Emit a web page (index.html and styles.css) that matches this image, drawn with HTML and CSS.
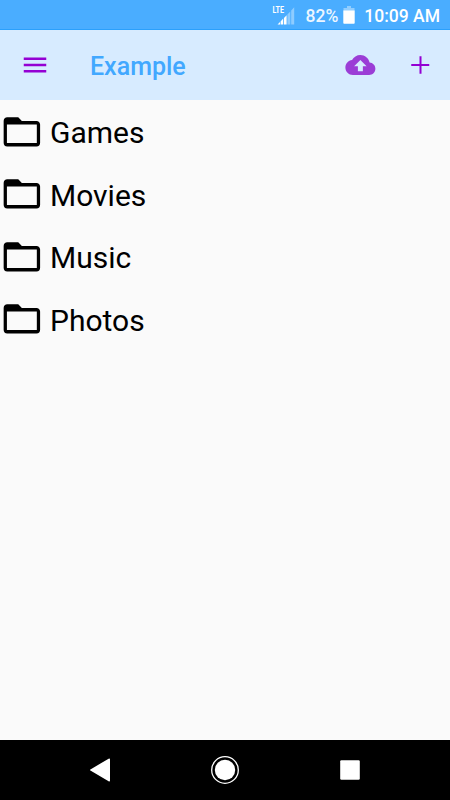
FILE: index.html
```html
<!DOCTYPE html>
<html lang="en">
<head>
<meta charset="utf-8">
<title>Example</title>
<link rel="stylesheet" href="styles.css">
</head>
<body>
<svg width="0" height="0" class="defs">
  <symbol id="folder" viewBox="0 0 24 24"><path d="M20.2 18.1H3.8V7.9h16.4M20 6h-8l-2-2H4C2.89 4 2 4.89 2 6v12a2 2 0 0 0 2 2h16a2 2 0 0 0 2-2V8c0-1.11-.9-2-2-2Z"/></symbol>
</svg>
<div class="screen">
  <div class="status">
    <svg class="signal" width="24" height="22" viewBox="0 0 24 22">
      <text class="lte" x=".5" y="7.5" textLength="11.5" lengthAdjust="spacingAndGlyphs">LTE</text>
      <path fill="#fff" d="M5.5 19.5 8 17v2.5zM8.6 19.5v-3.1l2.6-2.8v5.9zM12 19.5v-6.6l2.6-2.7v9.3z"/>
      <path fill="#fff" opacity=".38" d="M15.4 19.5V9.4l2.9-3v13.1zM19.2 19.5V5.4l3-3.1v17.2z"/>
    </svg>
    <span class="percent">82%</span>
    <svg class="battery" width="12" height="18" viewBox="0 0 12 18"><path fill="#fff" opacity=".4" d="M4 0h4v2h3.5v3H.5V2H4z"/><path fill="#fff" d="M.3 4.6h11.4V17a.8.8 0 0 1-.8.8H1.1a.8.8 0 0 1-.8-.8z"/></svg>
    <span class="time">10:09 AM</span>
  </div>
  <header class="bar">
    <svg class="icon" viewBox="0 0 24 24"><path d="M3 6h18v2H3zM3 11h18v2H3zM3 16h18v2H3z"/></svg>
    <h1>Example</h1>
    <svg class="icon cloud" viewBox="0 0 24 24"><path transform="translate(.3 0)" d="M19.35 10.04C18.67 6.59 15.64 4 12 4 9.11 4 6.6 5.64 5.35 8.04 2.34 8.36 0 10.91 0 14c0 3.31 2.69 6 6 6h13c2.76 0 5-2.24 5-5 0-2.64-2.05-4.78-4.65-4.96zM14 13v4h-4v-4H7l5-5 5 5z"/></svg>
    <svg class="icon plus" viewBox="0 0 24 24"><path d="M19.4 12.8h-6.2V19h-1.6v-6.2H5v-1.6h6.6V5h1.6v6.2h6.2z"/></svg>
  </header>
  <ul class="list">
    <li><svg class="folder"><use href="#folder"/></svg><span>Games</span></li>
    <li><svg class="folder"><use href="#folder"/></svg><span>Movies</span></li>
    <li><svg class="folder"><use href="#folder"/></svg><span>Music</span></li>
    <li><svg class="folder"><use href="#folder"/></svg><span>Photos</span></li>
  </ul>
  <nav class="nav">
    <svg width="30" height="30" viewBox="0 0 30 30"><path fill="#fff" d="M5.4 14.4 23.6 3.7q1.4-.6 1.4.9v20.8q0 1.5-1.4.9L5.4 15.6q-.9-.6 0-1.2z"/></svg>
    <svg width="30" height="30" viewBox="0 0 30 30"><circle cx="15" cy="15" r="10.2" fill="#fff"/><circle cx="15" cy="15" r="13.3" fill="none" stroke="#fff" stroke-width="1.3"/></svg>
    <svg width="30" height="30" viewBox="0 0 30 30"><rect x="5.2" y="5.2" width="19.6" height="19.6" rx="1.2" fill="#fff"/></svg>
  </nav>
</div>
</body>
</html>
```
FILE: styles.css
```css
* { box-sizing: border-box; }
body { margin: 0; font-family: Roboto, sans-serif; }
svg { display: block; flex: none; }
.defs { position: absolute; }
.screen {
  display: flex;
  flex-direction: column;
  width: 450px;
  height: 800px;
  overflow: hidden;
  background: #fafafa;
}
.status {
  display: flex;
  align-items: center;
  justify-content: flex-end;
  height: 30px;
  padding: 2px 10px 0 0;
  background: #4aadff;
  border-bottom: 1px solid #2ba0fc;
  color: #fff;
  font-size: 17.5px;
  font-weight: 500;
  line-height: 30px;
  white-space: nowrap;
}
.lte { fill: #fff; font-size: 9px; font-weight: 700; }
.percent { margin: 1px 0 0 10px; opacity: .9; }
.battery { margin: -1px 9px 0 5px; }
.time { margin-top: 1px; }
.bar {
  display: flex;
  align-items: center;
  height: 70px;
  padding: 0 14.6px 0 20px;
  background: #d7ebff;
}
.icon { width: 30px; height: 30px; fill: #9400d3; overflow: visible; }
.bar h1 {
  flex: 1;
  margin: 3px 0 0 40px;
  color: #42a8ff;
  font-size: 25px;
  font-weight: 500;
  line-height: 30px;
}
.bar .cloud { fill: #9b3dd6; }
.plus { margin-left: 30px; }
.list {
  flex: 1;
  margin: 0;
  padding: 0;
  list-style: none;
}
.list li {
  display: flex;
  align-items: center;
  height: 62.5px;
  color: #000;
  font-size: 30px;
}
.folder { width: 43.75px; height: 43.75px; margin-top: 1px; }
.list span { margin: 2.5px 0 0 6.25px; }
.nav {
  display: flex;
  align-items: center;
  justify-content: space-between;
  height: 60px;
  padding: 0 85px;
  background: #000;
}
```
